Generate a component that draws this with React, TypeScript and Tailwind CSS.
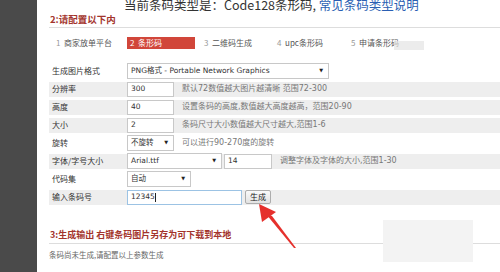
import type { ReactNode } from "react";

const cjk = "font-['Noto_Sans_CJK_SC','Noto_Sans',sans-serif]";
const verdana = "font-['DejaVu_Sans','Noto_Sans_CJK_SC',sans-serif]";

function Row({ label, gray, children }: { label: string; gray?: boolean; children: ReactNode }) {
  return (
    <div className="h-[18px] py-[1.5px]">
      <div className={gray ? "flex h-full items-center bg-[#eeeeee]" : "flex h-full items-center"}>
        <div className="w-[78px] shrink-0 pl-[3px] text-[8px] text-[#333]">{label}</div>
        <div className="flex items-center">{children}</div>
      </div>
    </div>
  );
}

function FakeSelect({ value, width }: { value: string; width: string }) {
  return (
    <div
      className={`${width} flex h-[16px] items-center justify-between border border-[#c8c8c8] bg-white pl-[3px] pr-[5px] text-[7.5px] text-[#333] ${verdana}`}
    >
      <span className="whitespace-nowrap">{value}</span>
      <span className="text-[5px] text-[#222]">▼</span>
    </div>
  );
}

function TextBox({ value, width, focused }: { value: string; width: string; focused?: boolean }) {
  return (
    <div
      className={`${width} flex h-[15px] items-center bg-white pl-[3px] text-[7.5px] text-[#333] ${verdana} ${
        focused ? "border border-[#9cc3e4]" : "border border-[#c8c8c8]"
      }`}
    >
      {value}
      {focused ? <span className="ml-[0.5px] h-[9px] w-px bg-[#222]" /> : null}
    </div>
  );
}

function Hint({ children }: { children: ReactNode }) {
  return <span className={`ml-[8px] whitespace-nowrap text-[8px] text-[#777] ${verdana}`}>{children}</span>;
}

export default function App() {
  return (
    <div className={`relative flex h-[272px] w-[500px] overflow-hidden bg-white ${cjk}`}>
      <div className="w-[37px] shrink-0 bg-[#4a4a4a]" />

      <div className="flex-1 pl-[12px]">
        {/* page title, cut off by the top edge */}
        <div className="-mt-[2px] h-[13px] whitespace-nowrap pl-[75px] text-[12.5px] leading-[13px] text-[#333]">
          当前条码类型是：Code128条形码, <span className="text-[#2b5fb3]">常见条码类型说明</span>
        </div>

        <div className="mt-[2px] pl-[1px] text-[9.5px] font-bold leading-[12px] text-[#a3342c]">2:请配置以下内</div>
        <div className="mt-[2px] h-px bg-[#dddddd]" />

        {/* steps */}
        <div className="mt-[9px] flex h-[12px] items-center text-[8px] text-[#555]">
          <div className="w-[78px] pl-[7px]">
            <span className="text-[#999]">1</span>&nbsp; 商家放单平台
          </div>
          <div className="flex h-[12px] w-[68px] items-center bg-[#d1463a] pl-[3px] text-white">2&nbsp; 条形码</div>
          <div className="ml-[9px] w-[73px]">
            <span className="text-[#999]">3</span>&nbsp; 二维码生成
          </div>
          <div className="w-[74px]">
            <span className="text-[#999]">4</span>&nbsp; upc条形码
          </div>
          <div>
            <span className="text-[#999]">5</span>&nbsp; 申请条形码
          </div>
        </div>

        {/* form */}
        <div className="mt-[13px]">
          <Row label="生成图片格式">
            <FakeSelect value="PNG格式 - Portable Network Graphics" width="w-[202px]" />
          </Row>
          <Row label="分辨率" gray>
            <TextBox value="300" width="w-[47px]" />
            <Hint>默认72数值越大图片越清晰 范围72-300</Hint>
          </Row>
          <Row label="高度" gray>
            <TextBox value="40" width="w-[47px]" />
            <Hint>设置条码的高度,数值越大高度越高，范围20-90</Hint>
          </Row>
          <Row label="大小" gray>
            <TextBox value="2" width="w-[47px]" />
            <Hint>条码尺寸大小数值越大尺寸越大,范围1-6</Hint>
          </Row>
          <Row label="旋转">
            <FakeSelect value="不旋转" width="w-[47px]" />
            <Hint>可以进行90-270度的旋转</Hint>
          </Row>
          <Row label="字体/字号大小" gray>
            <FakeSelect value="Arial.ttf" width="w-[95px]" />
            <div className="ml-[2px]">
              <TextBox value="14" width="w-[48px]" />
            </div>
            <Hint>调整字体及字体的大小,范围1-30</Hint>
          </Row>
          <Row label="代码集">
            <FakeSelect value="自动" width="w-[64px]" />
          </Row>
          <Row label="输入条码号" gray>
            <TextBox value="12345" width="w-[115px]" focused />
            <button
              type="button"
              className="ml-[3px] flex h-[14px] w-[26px] items-center justify-center rounded-[2px] border border-[#adadad] bg-gradient-to-b from-[#fafafa] to-[#e2e2e2] text-[8px] text-[#222]"
            >
              生成
            </button>
          </Row>
        </div>

        <div className="mt-[23px] pl-[1px] text-[9px] font-bold leading-[12px] text-[#a3342c]">
          3:生成输出 右键条码图片另存为可下载到本地
        </div>
        <div className="mt-[2px] h-px bg-[#dddddd]" />
        <div className="mt-[5px] text-[7.5px] text-[#666]">条码尚未生成,请配置以上参数生成</div>
      </div>

      {/* faint overlays from the capture */}
      <div className="absolute left-[394px] top-[41px] h-[9px] w-[30px] bg-[#e4e4e4]/70" />
      <div className="absolute left-[383px] top-[220px] h-[42px] w-[90px] bg-[#f3f3f3]" />

      {/* red annotation arrow */}
      <svg className="absolute left-0 top-0" width="500" height="272" viewBox="0 0 500 272">
        <polygon points="259,204 262,222 276,212" fill="#e5302c" />
        <polygon points="266,214 272,216 296,248 294,248" fill="#e5302c" />
      </svg>
    </div>
  );
}
